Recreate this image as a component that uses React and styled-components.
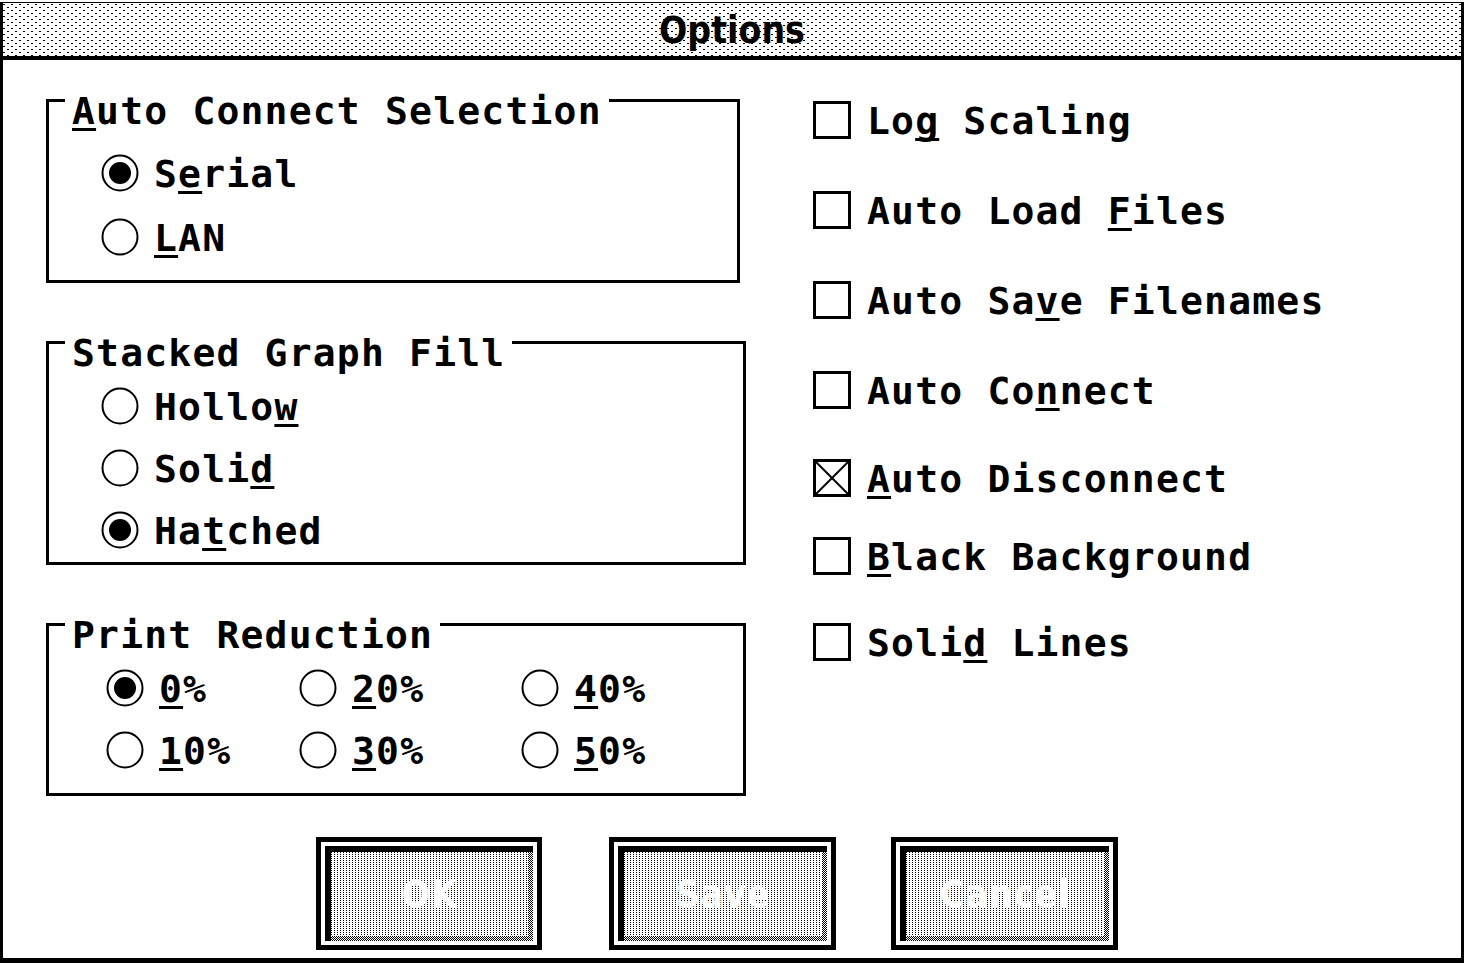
import React from 'react'
import styled, { createGlobalStyle } from 'styled-components'

const GlobalStyle = createGlobalStyle`
  html, body { margin: 0; padding: 0; background: #fff; }
  body { width: 1464px; height: 963px; overflow: hidden; }
`

const mono = `"DejaVu Sans Mono", "Liberation Mono", monospace`
const sans = `"DejaVu Sans Condensed", "DejaVu Sans", "Liberation Sans", sans-serif`

// 2x1 dashes on an 8x6 tile, second row shifted by half a period
const titleDither = `
  conic-gradient(at 2px 1px, transparent 75%, #000 0) 0 1px / 8px 6px,
  conic-gradient(at 2px 1px, transparent 75%, #000 0) 4px 4px / 8px 6px,
  #fff
`

// dashed rows, every other row shifted so the gaps don't line up
const faceDither = `
  linear-gradient(to right, transparent 4px, #fff 4px) 0 0 / 6px 4px,
  linear-gradient(to right, transparent 4px, #fff 4px) 3px 2px / 6px 4px,
  linear-gradient(to bottom, #000 1px, #fff 1px) 0 0 / 6px 2px
`

const checker = `repeating-conic-gradient(#000 0 25%, #fff 0 50%) 0 0 / 2px 2px`

const Window = styled.div`
  box-sizing: border-box;
  margin-top: 2px;
  width: 1464px;
  height: 961px;
  border-top: 1px solid #000;
  border-left: 3px solid #000;
  border-right: 3px solid #000;
  border-bottom: 5px solid #000;
  display: flex;
  flex-direction: column;
  background: #fff;
`

const TitleBar = styled.div`
  height: 53px;
  border-bottom: 4px solid #000;
  background: ${titleDither};
  display: flex;
  align-items: center;
  justify-content: center;
`

const Title = styled.span`
  font-family: ${sans};
  font-stretch: condensed;
  font-weight: bold;
  font-size: 37px;
  line-height: 1;
  color: #000;
  margin-top: 2px;
`

const Body = styled.div`
  display: flex;
  padding: 39px 0 0 43px;
`

const LeftCol = styled.div`
  display: flex;
  flex-direction: column;
  gap: 58px;
  width: 700px;
`

const RightCol = styled.div`
  display: flex;
  flex-direction: column;
  margin: 2px 0 0 67px;
`

const GroupBox = styled.div`
  position: relative;
  box-sizing: border-box;
  width: ${p => p.$w}px;
  border: 3px solid #000;
  padding: ${p => p.$pad};
`

const Legend = styled.div`
  position: absolute;
  top: -11px;
  left: 16px;
  padding: 0 7px;
  background: #fff;
`

const Text = styled.span`
  font-family: ${mono};
  font-weight: bold;
  font-size: 38px;
  line-height: 38px;
  letter-spacing: 1.2px;
  color: #000;
  white-space: pre;
  position: relative;
  top: 1px;
`

const U = styled.span`
  text-decoration: underline;
  text-decoration-thickness: 3px;
  text-underline-offset: 4px;
  text-decoration-skip-ink: none;
`

const Row = styled.div`
  display: flex;
  align-items: center;
  gap: 15px;
  height: ${p => p.$h || 62}px;
`

const RadioGrid = styled.div`
  display: grid;
  grid-template-columns: 193px 222px 1fr;
  grid-auto-rows: 62px;
`

const CheckRow = styled.div`
  display: flex;
  align-items: center;
  gap: 16px;
  height: 38px;
  margin-top: ${p => p.$mt}px;
`

const ButtonRow = styled.div`
  display: flex;
  margin-top: 41px;
  padding-left: 313px;
`

const ButtonOuter = styled.div`
  box-sizing: border-box;
  width: ${p => p.$w}px;
  height: 113px;
  margin-left: ${p => p.$ml || 0}px;
  border: 5px solid #000;
  padding: 4px;
  background: #fff;
  display: flex;
`

const ButtonBevel = styled.div`
  flex: 1;
  display: flex;
  border-top: 6px solid #000;
  border-left: 6px solid #000;
  padding: 0 5px 5px 0;
  background: ${checker};
`

const ButtonFace = styled.div`
  flex: 1;
  display: flex;
  align-items: center;
  justify-content: center;
  background: ${faceDither};
  font-family: ${sans};
  font-stretch: condensed;
  font-weight: bold;
  font-size: 37px;
  color: #fff;
  letter-spacing: 1px;
`

function Mn({ text, at }) {
  if (at < 0) return <Text>{text}</Text>
  return (
    <Text>
      {text.slice(0, at)}
      <U>{text[at]}</U>
      {text.slice(at + 1)}
    </Text>
  )
}

function Radio({ checked }) {
  return (
    <svg width="38" height="38" viewBox="0 0 38 38" style={{ flex: 'none' }}>
      <circle cx="19" cy="19" r="17.5" fill="#fff" stroke="#000" strokeWidth="2" />
      {checked && <circle cx="19" cy="19" r="11" fill="#000" />}
    </svg>
  )
}

function Check({ checked }) {
  return (
    <svg width="38" height="38" viewBox="0 0 38 38" style={{ flex: 'none' }}>
      <rect x="1.5" y="1.5" width="35" height="35" fill="#fff" stroke="#000" strokeWidth="3" />
      {checked && (
        <g stroke="#000" strokeWidth="2">
          <line x1="3" y1="3" x2="35" y2="35" />
          <line x1="35" y1="3" x2="3" y2="35" />
        </g>
      )}
    </svg>
  )
}

const connect = [
  { text: 'Serial', at: 1, on: true },
  { text: 'LAN', at: 0 },
]

const fill = [
  { text: 'Hollow', at: 5 },
  { text: 'Solid', at: 4 },
  { text: 'Hatched', at: 2, on: true },
]

const reduction = [
  { text: '0%', on: true },
  { text: '20%' },
  { text: '40%' },
  { text: '10%' },
  { text: '30%' },
  { text: '50%' },
]

const checks = [
  { text: 'Log Scaling', at: 2, mt: 0 },
  { text: 'Auto Load Files', at: 10, mt: 52 },
  { text: 'Auto Save Filenames', at: 7, mt: 52 },
  { text: 'Auto Connect', at: 7, mt: 52 },
  { text: 'Auto Disconnect', at: 0, mt: 50, on: true },
  { text: 'Black Background', at: 0, mt: 40 },
  { text: 'Solid Lines', at: 4, mt: 48 },
]

export default function App() {
  return (
    <>
      <GlobalStyle />
      <Window>
        <TitleBar>
          <Title>Options</Title>
        </TitleBar>
        <Body>
          <LeftCol>
            <GroupBox $w={694} $pad="39px 0 11px 52px">
              <Legend><Mn text="Auto Connect Selection" at={0} /></Legend>
              {connect.map(o => (
                <Row key={o.text} $h={64}>
                  <Radio checked={o.on} />
                  <Mn text={o.text} at={o.at} />
                </Row>
              ))}
            </GroupBox>
            <GroupBox $w={700} $pad="31px 0 1px 52px">
              <Legend><Mn text="Stacked Graph Fill" at={-1} /></Legend>
              {fill.map(o => (
                <Row key={o.text}>
                  <Radio checked={o.on} />
                  <Mn text={o.text} at={o.at} />
                </Row>
              ))}
            </GroupBox>
            <GroupBox $w={700} $pad="31px 0 12px 57px">
              <Legend><Mn text="Print Reduction" at={-1} /></Legend>
              <RadioGrid>
                {reduction.map(o => (
                  <Row key={o.text}>
                    <Radio checked={o.on} />
                    <Mn text={o.text} at={0} />
                  </Row>
                ))}
              </RadioGrid>
            </GroupBox>
          </LeftCol>
          <RightCol>
            {checks.map(c => (
              <CheckRow key={c.text} $mt={c.mt}>
                <Check checked={c.on} />
                <Mn text={c.text} at={c.at} />
              </CheckRow>
            ))}
          </RightCol>
        </Body>
        <ButtonRow>
          <ButtonOuter $w={226}>
            <ButtonBevel><ButtonFace>OK</ButtonFace></ButtonBevel>
          </ButtonOuter>
          <ButtonOuter $w={227} $ml={67}>
            <ButtonBevel><ButtonFace>Save</ButtonFace></ButtonBevel>
          </ButtonOuter>
          <ButtonOuter $w={227} $ml={55}>
            <ButtonBevel><ButtonFace>Cancel</ButtonFace></ButtonBevel>
          </ButtonOuter>
        </ButtonRow>
      </Window>
    </>
  )
}
